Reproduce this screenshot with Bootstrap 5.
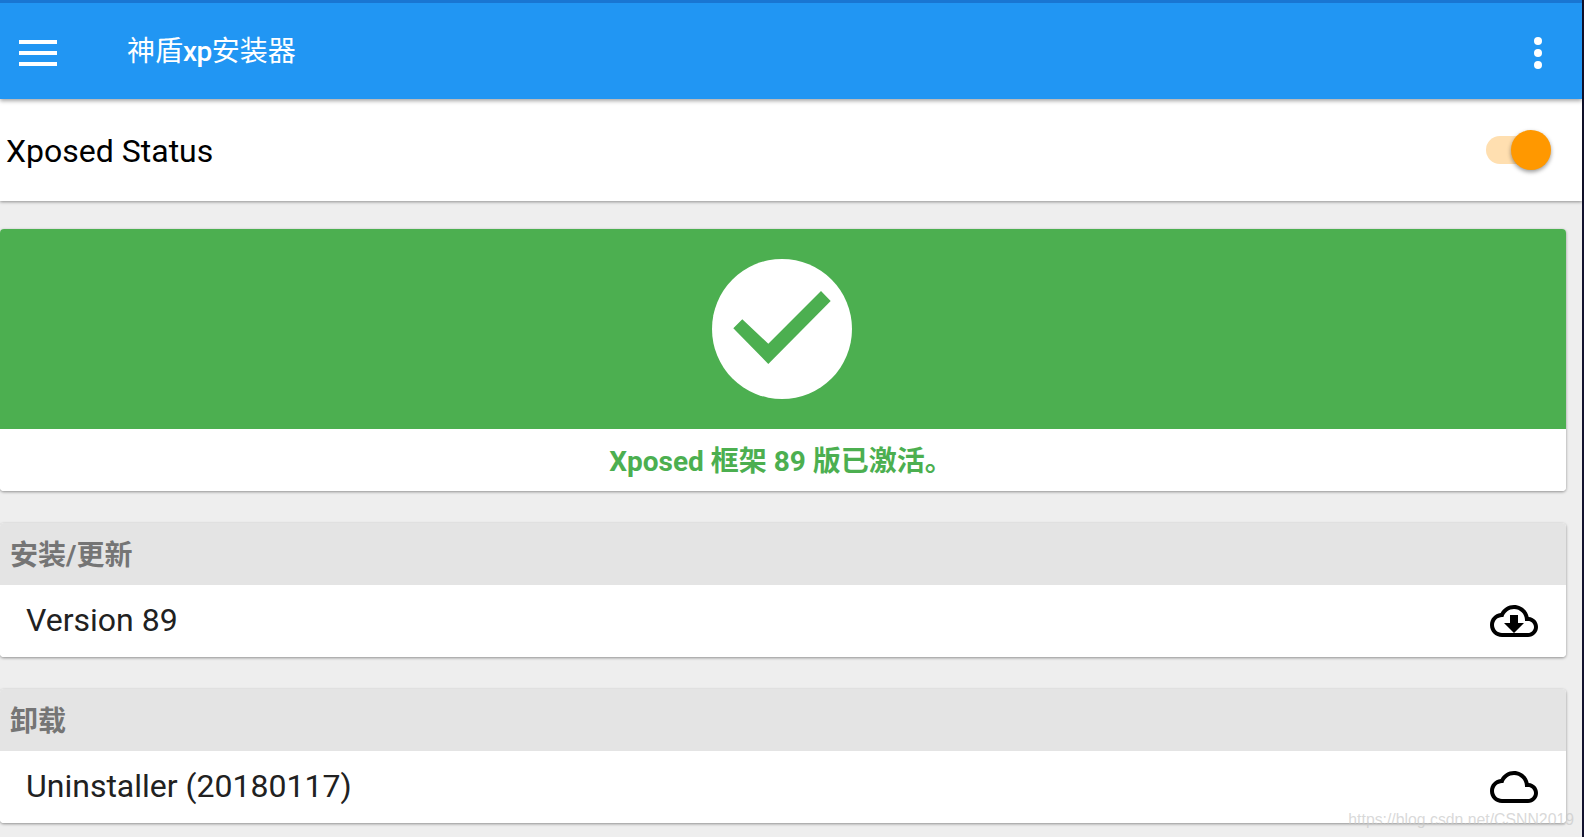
<!DOCTYPE html>
<html lang="zh-CN">
<head>
  <meta charset="UTF-8">
  <title>神盾xp安装器</title>
  <meta name="viewport" content="width=device-width, initial-scale=1">
  <link href="https://cdn.jsdelivr.net/npm/bootstrap@5.3.0/dist/css/bootstrap.min.css" rel="stylesheet">
  <style>
    html, body {
      height: 100%;
      overflow: hidden;
    }
    body {
      background: #12122e;
      font-family: Roboto, "Noto Sans CJK SC", sans-serif;
    }
    .app-shell {
      width: 1582px;
      height: 837px;
      background: #eeeeee;
    }
    .app-bar {
      height: 99px;
      padding: 3px 40px 0 19px;
      background: #2196f3;
      border-top: 3px solid #1976d2;
      box-shadow: 0 2px 4px rgba(0, 0, 0, .35);
      color: #fff;
      z-index: 2;
    }
    .menu-bars {
      width: 38px;
      gap: 7px;
      margin-right: 70px;
    }
    .menu-bars span {
      height: 4px;
      background: #fff;
    }
    .app-title {
      margin-bottom: 2px;
      font-size: 28px;
      font-weight: 400;
    }
    .app-title span {
      font-weight: 500;
      letter-spacing: -.5px;
    }
    .more-dots {
      gap: 4px;
    }
    .more-dots span {
      width: 8px;
      height: 8px;
      border-radius: 50%;
      background: #fff;
    }
    .status-row {
      height: 102px;
      padding: 0 42px 0 6px;
      background: #fff;
      box-shadow: 0 1px 3px rgba(0, 0, 0, .4);
      font-size: 32px;
      color: #000;
    }
    .status-label {
      padding-top: 2px;
    }
    .switch-track {
      width: 54px;
      height: 28px;
      border-radius: 14px;
      background: #ffdfb0;
    }
    .switch-thumb {
      top: -6px;
      right: -11px;
      width: 40px;
      height: 40px;
      border-radius: 50%;
      background: #ff9800;
      box-shadow: 0 2px 4px rgba(0, 0, 0, .4);
    }
    .panel-list {
      width: 1566px;
    }
    .panel-box {
      border: 0;
      border-radius: 4px;
      overflow: hidden;
      box-shadow: 0 1px 3px rgba(0, 0, 0, .4);
    }
    .first-panel {
      margin-top: 28px;
    }
    .next-panel {
      margin-top: 32px;
    }
    .hero-green {
      height: 200px;
      padding-right: 2px;
      background: #4caf50;
    }
    .hero-circle {
      width: 140px;
      height: 140px;
    }
    .hero-text {
      height: 62px;
      padding: 4px 4px 0 0;
      color: #4caf50;
      font-size: 28px;
      font-weight: 700;
    }
    .panel-head {
      height: 62px;
      padding: 4px 0 0 10px;
      background: #e4e4e4;
      color: #757575;
      font-size: 28px;
      font-weight: 700;
    }
    .panel-row {
      height: 72px;
      padding: 0 28px 0 26px;
      background: #fff;
      color: #212121;
      font-size: 32px;
    }
    .row-label {
      margin-bottom: 3px;
    }
    .cloud-icon {
      width: 48px;
      height: 48px;
    }
    .csdn-mark {
      right: 8px;
      bottom: 5px;
      color: rgba(200, 200, 200, .7);
      font-family: "Liberation Sans", sans-serif;
      font-size: 15.8px;
    }
  </style>
</head>
<body>

<div class="app-shell position-relative">
  <!-- Toolbar -->
  <header class="app-bar d-flex align-items-center position-relative">
    <div class="menu-bars d-flex flex-column">
      <span></span>
      <span></span>
      <span></span>
    </div>
    <div class="app-title">神盾<span>xp</span>安装器</div>
    <div class="more-dots d-flex flex-column ms-auto">
      <span></span>
      <span></span>
      <span></span>
    </div>
  </header>

  <!-- Xposed switch -->
  <div class="status-row d-flex align-items-center justify-content-between">
    <span class="status-label">Xposed Status</span>
    <div class="switch-track position-relative">
      <div class="switch-thumb position-absolute"></div>
    </div>
  </div>

  <div class="panel-list">
    <!-- Framework state -->
    <div class="card panel-box first-panel">
      <div class="hero-green d-flex align-items-center justify-content-center">
        <svg class="hero-circle" viewBox="0 0 140 140">
          <circle cx="70" cy="70" r="70" fill="#fff"/>
          <polygon points="21.3,69.3 30.3,60.3 56.3,84.7 109,32 118.7,42 56.3,105" fill="#4caf50"/>
        </svg>
      </div>
      <div class="hero-text d-flex align-items-center justify-content-center bg-white">Xposed 框架 89 版已激活。</div>
    </div>

    <!-- Install -->
    <div class="card panel-box next-panel">
      <div class="panel-head d-flex align-items-center">安装/更新</div>
      <div class="panel-row d-flex align-items-center justify-content-between">
        <span class="row-label">Version 89</span>
        <svg class="cloud-icon" viewBox="0 0 24 24">
          <path d="M19.35 10.04C18.67 6.59 15.64 4 12 4 9.11 4 6.6 5.64 5.35 8.04 2.34 8.36 0 10.91 0 14c0 3.31 2.69 6 6 6h13c2.76 0 5-2.24 5-5 0-2.64-2.05-4.78-4.65-4.96zM19 18H6c-2.21 0-4-1.79-4-4s1.79-4 4-4h.71C7.37 7.69 9.48 6 12 6c3.04 0 5.5 2.46 5.5 5.5v.5H19c1.66 0 3 1.34 3 3s-1.34 3-3 3z"/>
          <path d="M17 13l-5 5-5-5h3V9h4v4h3z"/>
        </svg>
      </div>
    </div>

    <!-- Uninstall -->
    <div class="card panel-box next-panel">
      <div class="panel-head d-flex align-items-center">卸载</div>
      <div class="panel-row d-flex align-items-center justify-content-between">
        <span class="row-label">Uninstaller (20180117)</span>
        <svg class="cloud-icon" viewBox="0 0 24 24">
          <path d="M19.35 10.04C18.67 6.59 15.64 4 12 4 9.11 4 6.6 5.64 5.35 8.04 2.34 8.36 0 10.91 0 14c0 3.31 2.69 6 6 6h13c2.76 0 5-2.24 5-5 0-2.64-2.05-4.78-4.65-4.96zM19 18H6c-2.21 0-4-1.79-4-4s1.79-4 4-4h.71C7.37 7.69 9.48 6 12 6c3.04 0 5.5 2.46 5.5 5.5v.5H19c1.66 0 3 1.34 3 3s-1.34 3-3 3z"/>
        </svg>
      </div>
    </div>
  </div>

  <div class="csdn-mark position-absolute">https://blog.csdn.net/CSNN2019</div>
</div>

<script src="https://cdn.jsdelivr.net/npm/bootstrap@5.3.0/dist/js/bootstrap.bundle.min.js"></script>
</body>
</html>
